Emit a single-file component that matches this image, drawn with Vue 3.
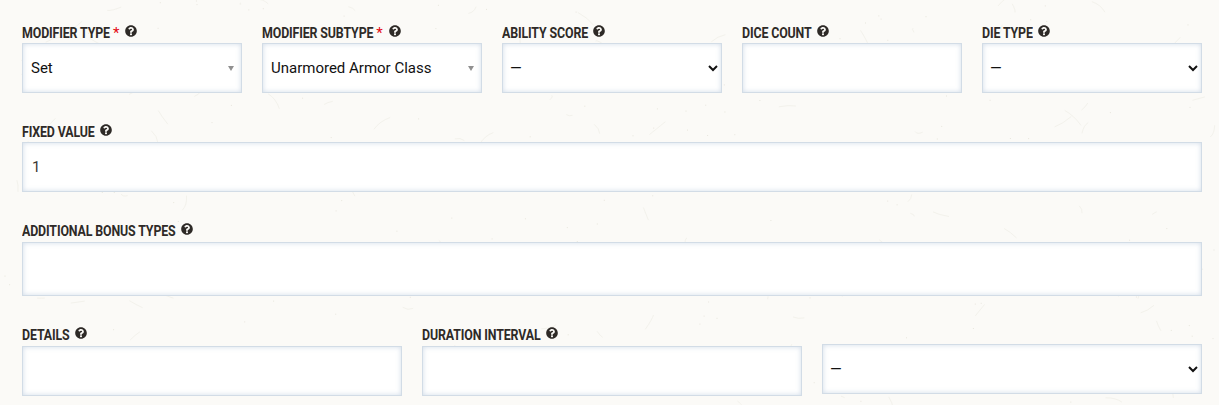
<script setup>
const seed = (i, k) => {
  const x = Math.sin(i * 127.1 + k * 311.7) * 43758.5453
  return x - Math.floor(x)
}
const fibres = Array.from({ length: 130 }, (_, i) => {
  const x = seed(i, 1) * 1219
  const y = seed(i, 2) * 405
  const dx = (seed(i, 3) - 0.5) * 36
  const dy = (seed(i, 4) - 0.5) * 30
  const cx = x + dx / 2 + (seed(i, 5) - 0.5) * 6
  const cy = y + dy / 2 + (seed(i, 6) - 0.5) * 6
  return `M${x.toFixed(1)} ${y.toFixed(1)}Q${cx.toFixed(1)} ${cy.toFixed(1)} ${(x + dx).toFixed(1)} ${(y + dy).toFixed(1)}`
})
const specks = Array.from({ length: 160 }, (_, i) => ({
  x: (seed(i, 7) * 1219).toFixed(1),
  y: (seed(i, 8) * 405).toFixed(1)
}))
const help = 'M504 256c0 137-111 248-248 248S8 393 8 256 119 8 256 8s248 111 248 248zM262.700 90c-54.500 0-89.300 23-116.500 63.800-3.500 5.300-2.300 12.400 2.800 16.300l34.700 26.300c5.200 3.900 12.600 3 16.700-2.100 17.900-22.700 30.100-35.800 57.300-35.800 20.400 0 45.700 13.100 45.700 33 0 15-12.400 22.700-32.600 34-23.600 13.200-54.800 29.700-54.800 70.900V320c0 6.600 5.400 12 12 12h56c6.600 0 12-5.400 12-12v-7c0-28.600 83.500-29.800 83.500-107.100C379.500 147.700 319 90 262.700 90zM256 354c-25.400 0-44 18-44 42s18.600 42 44 42 44-18 44-42-18.600-42-44-42z'
const row1 = [
  { label: 'Modifier Type', req: true, kind: 'faux', value: 'Set' },
  { label: 'Modifier Subtype', req: true, kind: 'faux', value: 'Unarmored Armor Class' },
  { label: 'Ability Score', kind: 'select' },
  { label: 'Dice Count', kind: 'input' },
  { label: 'Die Type', kind: 'select' }
]
</script>

<template>
  <div class="page">
    <svg class="texture" width="1219" height="405" aria-hidden="true">
      <path v-for="(d, i) in fibres" :key="i" :d="d" fill="none" stroke="#f3f2ec" stroke-width="1" />
      <rect v-for="(s, i) in specks" :key="'s' + i" :x="s.x" :y="s.y" width="1" height="1" fill="#e8e6dd" />
    </svg>

    <div class="row first">
      <div v-for="f in row1" :key="f.label" class="field">
        <label class="label">
          <span class="text">{{ f.label }}</span>
          <span v-if="f.req" class="req">*</span>
          <svg class="help" viewBox="0 0 512 512"><path :d="help" fill="#2e2a27" fill-rule="evenodd" /></svg>
        </label>
        <div v-if="f.kind === 'faux'" class="box faux">
          <span>{{ f.value }}</span>
          <i class="caret"></i>
        </div>
        <select v-else-if="f.kind === 'select'" class="box sel"><option>—</option></select>
        <input v-else class="box inp" type="text" />
      </div>
    </div>

    <div class="row second">
      <div class="field">
        <label class="label">
          <span class="text">Fixed Value</span>
          <svg class="help" viewBox="0 0 512 512"><path :d="help" fill="#2e2a27" fill-rule="evenodd" /></svg>
        </label>
        <input class="box inp" type="text" value="1" />
      </div>
    </div>

    <div class="row third">
      <div class="field">
        <label class="label">
          <span class="text">Additional Bonus Types</span>
          <svg class="help" viewBox="0 0 512 512"><path :d="help" fill="#2e2a27" fill-rule="evenodd" /></svg>
        </label>
        <div class="box tall"></div>
      </div>
    </div>

    <div class="row fourth">
      <div class="field">
        <label class="label">
          <span class="text">Details</span>
          <svg class="help" viewBox="0 0 512 512"><path :d="help" fill="#2e2a27" fill-rule="evenodd" /></svg>
        </label>
        <input class="box inp" type="text" />
      </div>
      <div class="field">
        <label class="label">
          <span class="text">Duration Interval</span>
          <svg class="help" viewBox="0 0 512 512"><path :d="help" fill="#2e2a27" fill-rule="evenodd" /></svg>
        </label>
        <input class="box inp" type="text" />
      </div>
      <div class="field end">
        <select class="box sel"><option>—</option></select>
      </div>
    </div>
  </div>
</template>

<style>
html, body { margin: 0; background: #fbfaf7; }
</style>

<style scoped>
.page {
  position: relative;
  box-sizing: border-box;
  width: 1219px;
  height: 405px;
  padding: 23px 17px 0 22px;
  overflow: hidden;
  background: #fbfaf7;
  font-family: Roboto, "Liberation Sans", sans-serif;
}
.texture { position: absolute; left: 0; top: 0; }
.row { position: relative; display: flex; gap: 20px; }
.second { margin-top: 29px; }
.third { margin-top: 30px; }
.fourth { margin-top: 30px; }
.field { flex: 1 1 0; min-width: 0; display: flex; flex-direction: column; }
.end { justify-content: flex-end; padding-bottom: 2px; }
.label {
  box-sizing: border-box;
  display: flex;
  align-items: center;
  height: 20px;
  padding-bottom: 2px;
  font-size: 12.4px;
  font-weight: 700;
  letter-spacing: -0.13px;
  text-transform: uppercase;
  color: #2e2a27;
}
.third .label, .fourth .label { padding-bottom: 4px; }
.text { display: inline-block; transform: scaleY(1.16); }
.req { color: #e40712; margin: 2px 1px 0 3px; font-size: 15px; line-height: 1; font-weight: 400; }
.help { width: 12px; height: 12px; margin-left: 5px; margin-top: -2px; flex: none; }
.box {
  box-sizing: border-box;
  display: block;
  width: 100%;
  height: 50px;
  margin: 0;
  border: 1px solid #d2dce6;
  border-radius: 0;
  outline: none;
  background: #fff;
  box-shadow: inset 0 0 5px rgba(190, 205, 222, 0.7);
  font-family: Roboto, "Liberation Sans", sans-serif;
  font-size: 15px;
  color: #111;
}
.tall { height: 54px; }
.inp { padding: 0 9px; color: #3c3935; }
.sel { padding: 0 7px 0 3px; font-size: 15px; }
.faux {
  display: flex;
  align-items: center;
  justify-content: space-between;
  padding: 0 7px 0 8px;
}
.caret {
  width: 0;
  height: 0;
  border-left: 3px solid transparent;
  border-right: 3px solid transparent;
  border-top: 5px solid #909090;
}
</style>
